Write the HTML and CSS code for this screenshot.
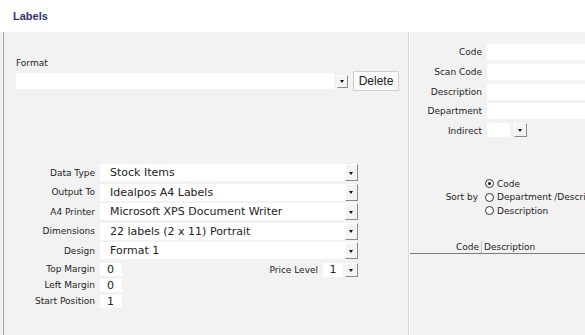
FILE: index.html
```html
<!DOCTYPE html>
<html lang="en">
<head>
    <meta charset="UTF-8">
    <meta name="viewport" content="width=device-width, initial-scale=1.0">
    <title>Labels</title>
    <link rel="stylesheet" href="styles.css">
</head>
<body>
    <header class="title-bar">
        <h1>Labels</h1>
    </header>

    <div class="main">
        <!-- Left side: format and print settings -->
        <section class="left-panel">
            <div class="format">
                <div class="format-label">Format</div>
                <div class="format-row">
                    <span class="format-input"></span>
                    <span class="drop drop-small"></span>
                    <button class="delete-btn">Delete</button>
                </div>
            </div>

            <div class="settings">
                <div class="setting-row">
                    <span class="field-label">Data Type</span>
                    <span class="select"><span class="select-text">Stock Items</span><span class="drop"></span></span>
                </div>
                <div class="setting-row">
                    <span class="field-label">Output To</span>
                    <span class="select"><span class="select-text">Idealpos A4 Labels</span><span class="drop"></span></span>
                </div>
                <div class="setting-row">
                    <span class="field-label">A4 Printer</span>
                    <span class="select"><span class="select-text">Microsoft XPS Document Writer</span><span class="drop"></span></span>
                </div>
                <div class="setting-row">
                    <span class="field-label">Dimensions</span>
                    <span class="select"><span class="select-text">22 labels (2 x 11) Portrait</span><span class="drop"></span></span>
                </div>
                <div class="setting-row">
                    <span class="field-label">Design</span>
                    <span class="select"><span class="select-text">Format 1</span><span class="drop"></span></span>
                </div>
            </div>

            <div class="margins">
                <span class="field-label">Top Margin</span>
                <span class="small-input">0</span>
                <span class="price-level">
                    <span class="field-label">Price Level</span>
                    <span class="price-input">1</span>
                    <span class="drop drop-price"></span>
                </span>

                <span class="field-label">Left Margin</span>
                <span class="small-input">0</span>
                <span></span>

                <span class="field-label">Start Position</span>
                <span class="small-input">1</span>
                <span></span>
            </div>
        </section>

        <!-- Right side: item filter -->
        <section class="right-panel">
            <div class="filters">
                <span class="field-label">Code</span>
                <span class="text-input"></span>
                <span class="field-label">Scan Code</span>
                <span class="text-input"></span>
                <span class="field-label">Description</span>
                <span class="text-input"></span>
                <span class="field-label">Department</span>
                <span class="text-input"></span>
                <span class="field-label">Indirect</span>
                <span class="indirect">
                    <span class="indirect-input"></span>
                    <span class="drop drop-price"></span>
                </span>
            </div>

            <div class="sort">
                <span class="sort-label">Sort by</span>
                <div class="radios">
                    <div class="radio-row"><span class="radio checked"></span>Code</div>
                    <div class="radio-row"><span class="radio"></span>Department /Description</div>
                    <div class="radio-row"><span class="radio"></span>Description</div>
                </div>
            </div>

            <div class="list-header">
                <span class="col-code">Code</span>
                <span class="col-desc">Description</span>
            </div>
        </section>
    </div>
</body>
</html>
```

FILE: styles.css
```css
/* General */
body {
    margin: 0;
    font-family: "DejaVu Sans", Verdana, sans-serif;
    font-size: 9px;
    color: #222;
    background: #f2f2f2;
    overflow: hidden;
    height: 335px;
}

.title-bar {
    height: 32px;
    background: #fff;
}

.title-bar h1 {
    margin: 0;
    padding: 10px 0 0 13px;
    font-family: "Liberation Sans", Arial, sans-serif;
    font-size: 11px;
    line-height: 12px;
    font-weight: bold;
    color: #33336b;
}

.main {
    display: flex;
    height: 303px;
}

.field-label {
    text-align: right;
    white-space: nowrap;
}

/* Dropdown arrow button */
.drop {
    position: relative;
    box-sizing: border-box;
    width: 13px;
    height: 17px;
    flex: none;
    background: #f4f4f4;
    border: 1px solid #fff;
    border-right-color: #8a8a8a;
    border-bottom-color: #8a8a8a;
}

.drop::after {
    content: "";
    position: absolute;
    left: 3px;
    top: 50%;
    margin-top: -1px;
    border-left: 2.5px solid transparent;
    border-right: 2.5px solid transparent;
    border-top: 3px solid #111;
}

.drop-small {
    width: 11px;
    height: 13px;
}

.drop-small::after {
    left: 2px;
}

.drop-price {
    height: 14px;
}

/* Left panel */
.left-panel {
    margin-left: 3px;
    width: 404px;
    flex: none;
    border-left: 1px solid #a3a3a3;
    border-right: 1px solid #d8d8d8;
}

.format {
    padding: 26px 0 0 12px;
}

.format-label {
    line-height: 11px;
    margin-bottom: 2px;
}

.format-row {
    display: flex;
    align-items: center;
    height: 20px;
}

.format-input {
    width: 318px;
    height: 16px;
    background: #fff;
}

.format-row .drop {
    margin-left: 3px;
}

.delete-btn {
    margin-left: 5px;
    width: 46px;
    height: 20px;
    padding: 0;
    font-family: "Liberation Sans", Arial, sans-serif;
    font-size: 12px;
    color: #222;
    background: #fafafa;
    border: 1px solid #cfcfcf;
    border-radius: 0;
}

.settings {
    margin-top: 73px;
    display: flex;
    flex-direction: column;
    gap: 2.5px;
}

.setting-row {
    display: flex;
    align-items: center;
    height: 17px;
}

.setting-row .field-label {
    width: 91px;
    margin-right: 5px;
}

.select {
    display: flex;
    width: 258px;
    height: 17px;
    background: #fff;
}

.select-text {
    flex: 1;
    padding-left: 10px;
    font-size: 11px;
    line-height: 17px;
    white-space: nowrap;
}

.margins {
    margin-top: 4px;
    display: grid;
    grid-template-columns: 91px 22px 1fr;
    grid-auto-rows: 13px;
    column-gap: 5px;
    row-gap: 3px;
    width: 354px;
    line-height: 13px;
}

.small-input {
    background: #fff;
    padding-left: 7px;
    font-size: 11px;
    line-height: 13px;
}

.price-level {
    display: flex;
    justify-content: flex-end;
    align-items: center;
    height: 14px;
}

.price-input {
    margin-left: 5px;
    width: 20px;
    height: 14px;
    background: #fff;
    font-size: 11px;
    line-height: 14px;
    text-align: center;
}

.price-level .drop {
    margin-left: 2px;
}

/* Right panel */
.right-panel {
    flex: 1;
    min-width: 0;
    border-left: 1px solid #fff;
    padding-top: 12px;
    overflow: hidden;
}

.filters {
    display: grid;
    grid-template-columns: 72px 140px;
    grid-auto-rows: 16px;
    column-gap: 5px;
    row-gap: 3.75px;
    line-height: 16px;
}

.text-input {
    background: #fff;
}

.indirect {
    display: flex;
    align-items: flex-start;
}

.indirect-input {
    width: 23px;
    height: 14px;
    margin-right: 4px;
    background: #fff;
}

.sort {
    margin-top: 38px;
    display: flex;
    align-items: center;
    white-space: nowrap;
}

.sort-label {
    flex: none;
    width: 68px;
    text-align: right;
    margin-right: 7px;
}

.radios {
    flex: none;
}

.radio-row {
    display: flex;
    align-items: center;
    height: 13.5px;
}

.radio {
    box-sizing: border-box;
    flex: none;
    width: 9px;
    height: 9px;
    margin-right: 3px;
    border: 1px solid #333;
    border-radius: 50%;
    background: #fff;
    display: flex;
    align-items: center;
    justify-content: center;
}

.radio.checked::after {
    content: "";
    width: 3px;
    height: 3px;
    border-radius: 50%;
    background: #111;
}

.list-header {
    margin-top: 23px;
    display: flex;
    height: 12px;
    line-height: 12px;
    border-bottom: 1px solid #7a7a7a;
}

.col-code {
    flex: none;
    width: 69px;
    padding-right: 2px;
    text-align: right;
    border-right: 1px solid #c4c4c4;
}

.col-desc {
    padding-left: 2px;
}
```
